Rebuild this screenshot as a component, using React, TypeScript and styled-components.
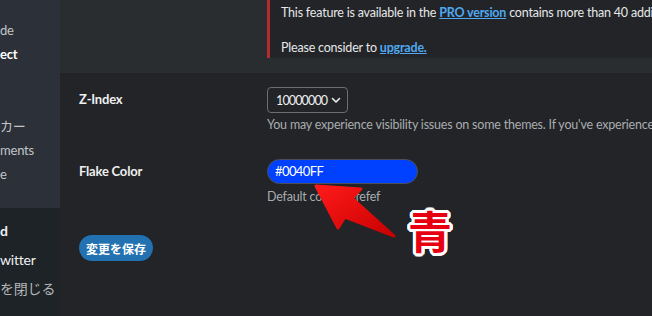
import styled, { createGlobalStyle } from 'styled-components'

const GlobalStyle = createGlobalStyle`
  html, body {
    margin: 0;
    padding: 0;
    background: #222427;
    overflow: hidden;
  }
  body {
    font-family: Lato, 'Noto Sans CJK JP', sans-serif;
    font-size: 12.5px;
    letter-spacing: -0.2px;
    color: #e2e3e4;
  }
`

const Page = styled.div`
  display: flex;
  height: 316px;
  position: relative;
`

const Sidebar = styled.nav`
  width: 60px;
  flex-shrink: 0;
  display: flex;
  flex-direction: column;
  overflow: hidden;
`

const SubMenu = styled.ul`
  list-style: none;
  margin: 0;
  padding: 21px 0 0;
  height: 208px;
  box-sizing: border-box;
  background: #2c3038;
`

const SubItem = styled.li<{ $current?: boolean }>`
  height: 24px;
  line-height: 18px;
  font-size: 13px;
  white-space: nowrap;
  color: ${(p) => (p.$current ? '#ffffff' : '#c3c4c7')};
  font-weight: ${(p) => (p.$current ? 700 : 400)};
`

const MainMenu = styled.ul`
  list-style: none;
  margin: 0;
  padding: 12px 0 0;
  flex: 1;
  background: #1d2327;
`

const MenuItem = styled.li<{ $active?: boolean; $muted?: boolean }>`
  height: 29px;
  line-height: 22px;
  font-size: 14px;
  white-space: nowrap;
  color: ${(p) => (p.$muted ? '#b4b6b9' : '#f0f0f1')};
  font-weight: ${(p) => (p.$active ? 700 : 400)};
`

const Main = styled.main`
  flex: 1;
  min-width: 0;
  overflow: hidden;
  background: #222427;
`

const ProRow = styled.div`
  background: #2a2d30;
  padding: 0 0 15px 207px;
`

const Notice = styled.div`
  background: #222427;
  border-left: 3px solid #b32d2e;
  padding: 4px 0 1px 11px;
  white-space: nowrap;
  overflow: hidden;
`

const NoticeText = styled.p`
  margin: 0 0 17px;
  line-height: 18px;
  color: #e6e7e8;

  &:last-child {
    margin-bottom: 0;
  }
`

const ProLink = styled.a`
  color: #4fa8f0;
  font-weight: 700;
  text-decoration: underline;
`

const FormRow = styled.div<{ $top: number }>`
  display: grid;
  grid-template-columns: 188px 1fr;
  padding: ${(p) => p.$top}px 0 0 19px;
`

const Label = styled.label`
  font-size: 13px;
  font-weight: 700;
  line-height: 18px;
  padding-top: 3px;
  color: #eeeff0;
`

const Field = styled.div`
  display: flex;
  flex-direction: column;
  align-items: flex-start;
  min-width: 0;
  overflow: hidden;
`

const Select = styled.div`
  display: flex;
  align-items: center;
  justify-content: space-between;
  box-sizing: border-box;
  width: 81px;
  height: 26px;
  padding: 0 6px 0 8px;
  border: 1px solid #6b6e72;
  border-radius: 4px;
  color: #eeeff0;
  font-size: 12.5px;
  letter-spacing: -0.85px;

  svg {
    flex-shrink: 0;
  }
`

const Description = styled.p<{ $gap: number }>`
  margin: ${(p) => p.$gap}px 0 0;
  line-height: 18px;
  white-space: nowrap;
  color: #a9acaf;
`

const ColorInput = styled.div`
  box-sizing: border-box;
  width: 151px;
  height: 25px;
  padding: 0 7px;
  border: 1px solid #4b5058;
  border-radius: 13px;
  background: #0040ff;
  color: #ffffff;
  font-size: 13px;
  font-weight: 400;
  letter-spacing: -0.6px;
  line-height: 23px;
`

const SaveButton = styled.button`
  margin: 29px 0 0 19px;
  height: 26px;
  padding: 0 7px;
  border: none;
  border-radius: 13px;
  background: #2271b1;
  color: #ffffff;
  font-family: 'Noto Sans CJK JP', sans-serif;
  font-size: 12px;
  font-weight: 700;
  cursor: pointer;
`

const Arrow = styled.svg`
  position: absolute;
  left: 0;
  top: 0;
  pointer-events: none;
`

const Callout = styled.span`
  position: absolute;
  left: 408px;
  top: 204px;
  font-family: 'Noto Sans CJK JP', sans-serif;
  font-size: 44px;
  font-weight: 700;
  line-height: 1.2;
  color: #e60012;
  text-shadow:
    3px 0 0 #fff, -3px 0 0 #fff, 0 3px 0 #fff, 0 -3px 0 #fff,
    2px 2px 0 #fff, -2px 2px 0 #fff, 2px -2px 0 #fff, -2px -2px 0 #fff,
    3px 1px 0 #fff, -3px 1px 0 #fff, 3px -1px 0 #fff, -3px -1px 0 #fff,
    1px 3px 0 #fff, -1px 3px 0 #fff, 1px -3px 0 #fff, -1px -3px 0 #fff;
`

export default function App() {
  return (
    <>
      <GlobalStyle />
      <Page>
        <Sidebar>
          <SubMenu>
            <SubItem>de</SubItem>
            <SubItem $current>ect</SubItem>
            <SubItem />
            <SubItem />
            <SubItem>カー</SubItem>
            <SubItem>ments</SubItem>
            <SubItem>e</SubItem>
          </SubMenu>
          <MainMenu>
            <MenuItem $active>d</MenuItem>
            <MenuItem>witter</MenuItem>
            <MenuItem $muted>を閉じる</MenuItem>
          </MainMenu>
        </Sidebar>

        <Main>
          <ProRow>
            <Notice>
              <NoticeText>
                This feature is available in the <ProLink>PRO version</ProLink> contains more than 40 additional options.
              </NoticeText>
              <NoticeText>
                Please consider to <ProLink>upgrade.</ProLink>
              </NoticeText>
            </Notice>
          </ProRow>

          <FormRow $top={14}>
            <Label>Z-Index</Label>
            <Field>
              <Select>
                10000000
                <svg width="10" height="10" viewBox="0 0 10 10" fill="none">
                  <path d="M1.5 3.5 5 7l3.5-3.5" stroke="#eeeff0" strokeWidth="1.6" strokeLinecap="round" strokeLinejoin="round" />
                </svg>
              </Select>
              <Description $gap={3}>
                You may experience visibility issues on some themes. If you've experienced problems, try another value.
              </Description>
            </Field>
          </FormRow>

          <FormRow $top={25}>
            <Label>Flake Color</Label>
            <Field>
              <ColorInput>#0040FF</ColorInput>
              <Description $gap={4}>Default color: #efefef</Description>
            </Field>
          </FormRow>

          <SaveButton>変更を保存</SaveButton>
        </Main>

        <Arrow width="652" height="316" viewBox="0 0 652 316">
          <defs>
            <linearGradient id="arrowFill" x1="0" y1="0" x2="1" y2="1">
              <stop offset="0" stopColor="#ff1a1a" />
              <stop offset="1" stopColor="#c80000" />
            </linearGradient>
          </defs>
          <polygon
            points="316,186 361,189 352,198 394,236 345,217 338,228"
            fill="url(#arrowFill)"
            stroke="url(#arrowFill)"
            strokeWidth="3"
            strokeLinejoin="round"
          />
        </Arrow>
        <Callout>青</Callout>
      </Page>
    </>
  )
}
